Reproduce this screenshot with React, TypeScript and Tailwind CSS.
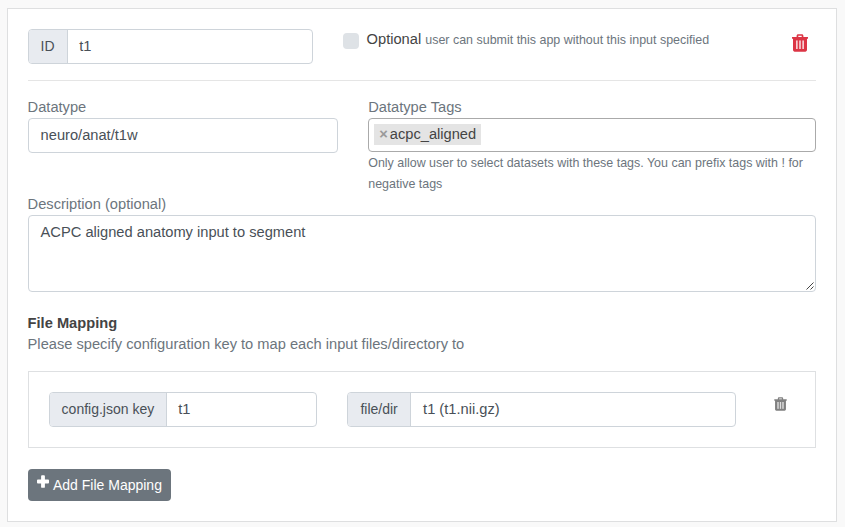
import type { ReactNode } from "react";

function TrashIcon({ className }: { className: string }) {
  return (
    <svg viewBox="0 0 16 18" className={className} fill="currentColor" fillRule="evenodd">
      <path opacity=".25" d="M4 6.400h8v8.600H4Z" />
      <path d="M4.600 3V1.700C4.600.8 5.300.2 6.100.2h3.800c.8 0 1.500.6 1.500 1.500V3H16v1.700h-1V15.800c0 1-.7 1.900-1.700 1.900H2.700c-1 0-1.700-.9-1.700-1.900V4.700H0V3H4.600Zm1.700 0h3.400V1.800H6.300V3ZM4 6.400v8.600h1.700V6.400H4Zm3.150 0v8.600h1.700V6.400h-1.700Zm3.150 0v8.600H12V6.400h-1.700Z" />
    </svg>
  );
}

function PlusIcon() {
  return (
    <svg viewBox="0 0 12 13" className="ml-[0.4px] h-[13px] w-3" fill="currentColor">
      <path d="M5 .3h2q.9 0 .9.9v3.400h3.200q.9 0 .9.9v2q0 .9-.9.9H7.900v3.500q0 .9-.9.9H5q-.9 0-.9-.9V8.400H.9Q0 8.400 0 7.500V5.500q0-.9.9-.9h3.200V1.200Q4.100.3 5 .3Z" />
    </svg>
  );
}

function Addon({ label, children, className, labelClass }: { label: string; children: ReactNode; className: string; labelClass: string }) {
  return (
    <div className={`flex h-[35px] overflow-hidden rounded-[4px] border border-[#ced4da] ${className}`}>
      <span className={`shrink-0 whitespace-nowrap border-r border-[#ced4da] bg-[#e8ebf0] pl-3 pt-1.5 text-[14px] text-[#495057] ${labelClass}`}>{label}</span>
      <span className="px-[11.7px] pt-1.5 text-[#495057]">{children}</span>
    </div>
  );
}

export default function App() {
  return (
    <div className="h-[527px] overflow-hidden bg-[#f9f9f9] pl-[6.6px] pt-2 font-['Liberation_Sans',Arial,sans-serif] text-[14.667px] leading-[21px] text-[#6c757d]">
      <div className="h-[514px] w-[830px] border border-[#dedfe0] bg-white p-5">
        <div className="flex h-[51px] items-start">
          <Addon label="ID" className="w-[285px]" labelClass="w-[39px]">t1</Addon>
          <span className="ml-[30px] mt-1 size-4 rounded-[4px] bg-[#dee2e6]" />
          <p className="ml-2 text-[#444]">
            Optional <small className="text-[12.467px] text-[#6c757d]">user can submit this app without this input specified</small>
          </p>
          <TrashIcon className="ml-auto mr-[7.6px] mt-[5px] h-[18px] w-4 text-[#dc3545]" />
        </div>
        <hr className="border-[#e5e5e5]" />

        <div className="mt-4 flex">
          <div className="w-[310.4px]">
            <div className="h-[21px]">Datatype</div>
            <div className="h-[35px] rounded-[4px] border border-[#ced4da] px-3 pt-1.5 text-[#495057]">neuro/anat/t1w</div>
          </div>
          <div className="ml-[30.4px] w-[447.6px]">
            <div className="h-[21px]">Datatype Tags</div>
            <div className="flex h-[34px] rounded-[4px] border border-[#aaa] pl-[5px] pt-[5px]">
              <span className="flex h-[21px] items-start bg-[#e4e4e4] px-[5px] leading-[20px] text-[#444]">
                <span className="mr-0.5 font-bold text-[#999]">×</span>acpc_aligned
              </span>
            </div>
            <p className="-mb-px pt-px text-[12.467px]">
              Only allow user to select datasets with these tags. You can prefix tags with ! for negative tags
            </p>
          </div>
        </div>

        <div className="h-[21px]">Description (optional)</div>
        <div className="flex h-[77px] justify-between rounded-[4px] border border-[#ced4da] pl-3 pt-1.5 text-[#495057]">
          <span>ACPC aligned anatomy input to segment</span>
          <svg viewBox="0 0 8 8" className="mb-px mr-[0.6px] size-2 self-end" stroke="#444" strokeWidth="1">
            <path d="M.5 7.500L7.500.5M4.500 7.500L7.500 4.500" />
          </svg>
        </div>

        <div className="mt-[21px] font-bold text-[#444]">File Mapping</div>
        <div>Please specify configuration key to map each input files/directory to</div>

        <div className="mt-[16px] flex h-[77px] items-start border border-[#dee0e2] p-5">
          <Addon label="config.json key" className="w-[268px]" labelClass="w-[117px]">t1</Addon>
          <Addon label="file/dir" className="ml-[30.8px] w-[388.6px]" labelClass="w-[63px]">t1 (t1.nii.gz)</Addon>
          <TrashIcon className="ml-auto mr-[7.6px] mt-[5px] h-[14px] w-[13px] text-[#808080]" />
        </div>

        <button className="mt-[21px] flex h-8 w-[143px] rounded-[4px] bg-[#6c757d] pl-[9px] pt-1.5 text-[14px] leading-[21px] text-white">
          <PlusIcon />
          <span className="ml-1">Add File Mapping</span>
        </button>
      </div>
    </div>
  );
}
